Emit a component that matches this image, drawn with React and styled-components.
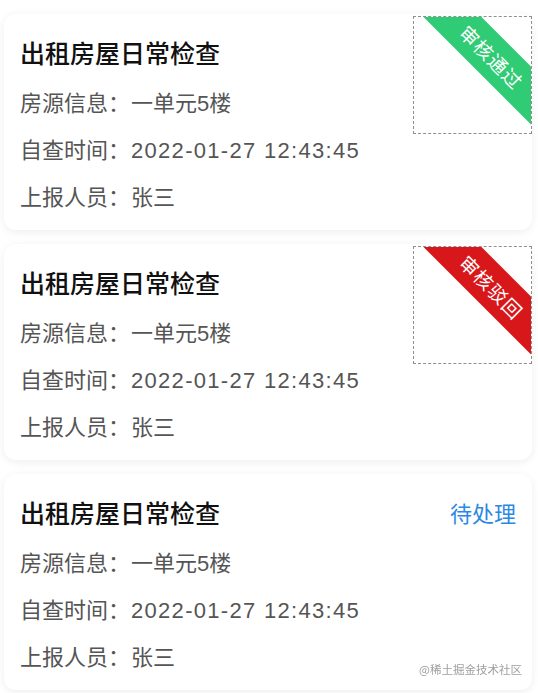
import React from 'react'
import styled, { createGlobalStyle } from 'styled-components'

const GlobalStyle = createGlobalStyle`
  body {
    margin: 0;
    background: #fff;
    font-family: "Noto Sans CJK SC", "Noto Sans", sans-serif;
  }
`

const List = styled.div`
  display: flex;
  flex-direction: column;
  gap: 14px;
  padding: 14px 6px 14px 4px;
`

const Card = styled.div`
  position: relative;
  height: 216px;
  box-sizing: border-box;
  padding: 22px 16px 0 16px;
  background: #fff;
  border-radius: 12px;
  box-shadow: 0 2px 10px rgba(0, 0, 0, 0.07);
`

const Header = styled.div`
  display: flex;
  justify-content: space-between;
  align-items: center;
  height: 32px;
  margin-bottom: 10px;
`

const Title = styled.div`
  font-size: 25px;
  font-weight: 500;
  color: #111;
  line-height: 32px;
`

const Pending = styled.span`
  font-size: 22px;
  color: #2b88e4;
  line-height: 32px;
`

const Row = styled.div`
  height: 47px;
  font-size: 22px;
  line-height: 47px;
  color: #555;
  white-space: nowrap;
`

const Label = styled.span`
  margin-right: 1px;
`

const Value = styled.span`
  font-family: "Liberation Sans", "Noto Sans CJK SC", sans-serif;
  line-height: 1;
  letter-spacing: ${p => (p.$wide ? '1.3px' : '0')};
`

const Stamp = styled.div`
  position: absolute;
  top: 2px;
  right: 0;
  width: 119px;
  height: 118px;
  box-sizing: border-box;
  border: 1px dashed #8f8f8f;
  overflow: hidden;
`

const Ribbon = styled.div`
  position: absolute;
  left: -12px;
  top: 19px;
  width: 180px;
  height: 41px;
  line-height: 41px;
  text-align: center;
  font-size: 19px;
  color: #fff;
  letter-spacing: 1px;
  background: ${p => p.$color};
  transform: rotate(45deg);
`

const Watermark = styled.div`
  position: fixed;
  right: 16px;
  bottom: 16px;
  font-size: 11.5px;
  color: #9e9e9e;
`

const items = [
  { status: 'pass' },
  { status: 'reject' },
  { status: 'pending' },
]

const ribbons = {
  pass: { text: '审核通过', color: '#30cb75' },
  reject: { text: '审核驳回', color: '#d8171b' },
}

const InspectionCard = ({ status }) => (
  <Card>
    <Header>
      <Title>出租房屋日常检查</Title>
      {status === 'pending' && <Pending>待处理</Pending>}
    </Header>
    <Row><Label>房源信息：</Label><Value>一单元5楼</Value></Row>
    <Row><Label>自查时间：</Label><Value $wide>2022-01-27 12:43:45</Value></Row>
    <Row><Label>上报人员：</Label><Value>张三</Value></Row>
    {ribbons[status] && (
      <Stamp>
        <Ribbon $color={ribbons[status].color}>{ribbons[status].text}</Ribbon>
      </Stamp>
    )}
  </Card>
)

export default function App() {
  return (
    <>
      <GlobalStyle />
      <List>
        {items.map((item, i) => (
          <InspectionCard key={i} status={item.status} />
        ))}
      </List>
      <Watermark>@稀土掘金技术社区</Watermark>
    </>
  )
}
